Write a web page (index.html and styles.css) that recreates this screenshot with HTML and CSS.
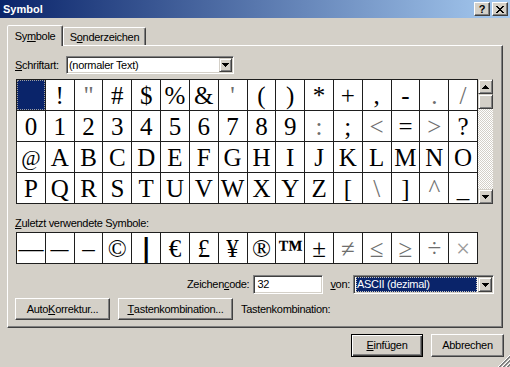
FILE: index.html
```html
<!DOCTYPE html>
<html lang="de">
<head>
<meta charset="utf-8">
<title>Symbol</title>
<link rel="stylesheet" href="styles.css">
</head>
<body>
<div class="titlebar">
  <span class="title">Symbol</span>
  <div class="capbtns">
    <span class="capbtn help">?</span>
    <span class="capbtn close"><svg width="8" height="7" viewBox="0 0 8 7" shape-rendering="crispEdges"><path d="M0 0h2v1H0zM6 0h2v1H6zM1 1h2v1H1zM5 1h2v1H5zM2 2h4v1H2zM3 3h2v1H3zM2 4h4v1H2zM1 5h2v1H1zM5 5h2v1H5zM0 6h2v1H0zM6 6h2v1H6z" fill="#000"/></svg></span>
  </div>
</div>

<div class="tabs">
  <div class="tab active">Sy<u>m</u>bole</div>
  <div class="tab inactive">S<u>o</u>nderzeichen</div>
</div>

<div class="panel">
  <div class="fontrow">
    <span class="lbl"><u>S</u>chriftart:</span>
    <div class="field combo font">
      <span class="val">(normaler Text)</span>
      <span class="ddbtn"><svg width="7" height="4" viewBox="0 0 7 4" shape-rendering="crispEdges"><path d="M0 0h7v1H0zM1 1h5v1H1zM2 2h3v1H2zM3 3h1v1H3z" fill="#000"/></svg></span>
    </div>
  </div>

  <div class="charwrap">
    <div class="chargrid">
      <div class="cell sel"></div><div class="cell">!</div><div class="cell lt">"</div><div class="cell">#</div><div class="cell">$</div><div class="cell">%</div><div class="cell">&amp;</div><div class="cell lt">'</div><div class="cell">(</div><div class="cell">)</div><div class="cell">*</div><div class="cell">+</div><div class="cell">,</div><div class="cell">-</div><div class="cell lt">.</div><div class="cell lt">/</div>
      <div class="cell">0</div><div class="cell">1</div><div class="cell">2</div><div class="cell">3</div><div class="cell">4</div><div class="cell">5</div><div class="cell">6</div><div class="cell">7</div><div class="cell">8</div><div class="cell">9</div><div class="cell lt">:</div><div class="cell">;</div><div class="cell lt">&lt;</div><div class="cell">=</div><div class="cell lt">&gt;</div><div class="cell">?</div>
      <div class="cell at">@</div><div class="cell">A</div><div class="cell">B</div><div class="cell">C</div><div class="cell">D</div><div class="cell">E</div><div class="cell">F</div><div class="cell">G</div><div class="cell">H</div><div class="cell">I</div><div class="cell">J</div><div class="cell">K</div><div class="cell">L</div><div class="cell">M</div><div class="cell">N</div><div class="cell">O</div>
      <div class="cell">P</div><div class="cell">Q</div><div class="cell">R</div><div class="cell">S</div><div class="cell">T</div><div class="cell">U</div><div class="cell">V</div><div class="cell">W</div><div class="cell">X</div><div class="cell">Y</div><div class="cell">Z</div><div class="cell">[</div><div class="cell lt">\</div><div class="cell">]</div><div class="cell lt">^</div><div class="cell">_</div>
    </div>
    <div class="vscroll">
      <span class="sbtn"><svg width="7" height="4" viewBox="0 0 7 4" shape-rendering="crispEdges"><path d="M3 0h1v1H3zM2 1h3v1H2zM1 2h5v1H1zM0 3h7v1H0z" fill="#000"/></svg></span>
      <span class="sbtn thumb"></span>
      <span class="track"></span>
      <span class="sbtn"><svg width="7" height="4" viewBox="0 0 7 4" shape-rendering="crispEdges"><path d="M0 0h7v1H0zM1 1h5v1H1zM2 2h3v1H2zM3 3h1v1H3z" fill="#000"/></svg></span>
    </div>
  </div>

  <div class="recentlbl"><u>Z</u>uletzt verwendete Symbole:</div>
  <div class="recent">
    <div class="cell">—</div><div class="cell"><span class="dash2">—</span></div><div class="cell">–</div><div class="cell">©</div><div class="cell vbar">|</div><div class="cell">€</div><div class="cell">£</div><div class="cell">¥</div><div class="cell">®</div><div class="cell tm">™</div><div class="cell">±</div><div class="cell lt">≠</div><div class="cell lt">≤</div><div class="cell lt">≥</div><div class="cell lt">÷</div><div class="cell xlt">×</div>
  </div>

  <div class="coderow">
    <span class="lbl">Zeichen<u>c</u>ode:</span>
    <div class="field code">32</div>
    <span class="lbl vonlbl"><u>v</u>on:</span>
    <div class="field combo von">
      <span class="val"><span class="hl">ASCII (dezimal)</span></span>
      <span class="ddbtn"><svg width="7" height="4" viewBox="0 0 7 4" shape-rendering="crispEdges"><path d="M0 0h7v1H0zM1 1h5v1H1zM2 2h3v1H2zM3 3h1v1H3z" fill="#000"/></svg></span>
    </div>
  </div>

  <div class="btnrow">
    <span class="btn b1">Auto<u>K</u>orrektur...</span>
    <span class="btn b2"><u>T</u>astenkombination...</span>
    <span class="lbl">Tastenkombination:</span>
  </div>
</div>

<div class="footer">
  <span class="btn ok"><span><u>E</u>infügen</span></span>
  <span class="btn cancel">Abbrechen</span>
</div>

<svg class="grip" width="12" height="12" viewBox="0 0 12 12" shape-rendering="crispEdges">
  <path d="M12 0L0 12M12 4L4 12M12 8L8 12" stroke="#fff" stroke-width="1"/>
  <path d="M12 1L1 12M12 2L2 12M12 5L5 12M12 6L6 12M12 9L9 12M12 10L10 12" stroke="#808080" stroke-width="1"/>
</svg>
</body>
</html>
```

FILE: styles.css
```css
* { box-sizing: border-box; }
html, body { margin: 0; padding: 0; }
body {
  width: 510px;
  height: 367px;
  overflow: hidden;
  position: relative;
  background: #d4d0c8;
  color: #000;
  font: 11px/13px "Liberation Sans", Arial, sans-serif;
  letter-spacing: -0.3px;
}
u { text-decoration: underline; text-underline-offset: 1px; }

.titlebar {
  height: 18px;
  display: flex;
  align-items: center;
  padding: 0 2px 0 3px;
  background: linear-gradient(to right, #0a246a, #a6caf0);
}
.title { color: #fff; font-weight: bold; letter-spacing: 0; }
.capbtns { margin-left: auto; display: flex; gap: 2px; }
.capbtn {
  width: 16px; height: 14px;
  display: flex; align-items: center; justify-content: center;
  background: #d4d0c8;
  border: 1px solid; border-color: #fff #404040 #404040 #fff;
  box-shadow: inset -1px -1px #808080;
  font-weight: bold; font-size: 11px; line-height: 11px;
}

.tabs {
  display: flex; align-items: flex-end;
  height: 20px; margin-top: 7px; padding-left: 7px;
}
.tab {
  height: 18px;
  display: flex; align-items: center; justify-content: center;
  padding-top: 1px;
  border: 1px solid; border-bottom: 0;
  border-color: #fff #404040 transparent #fff;
  box-shadow: inset -1px 0 #808080;
  border-radius: 2px 2px 0 0;
}
.tab.active {
  width: 56px; height: 21px; margin-bottom: -1px;
  position: relative; z-index: 1;
  background: #d4d0c8; padding-top: 0;
}
.tab.inactive { width: 83px; }

.panel {
  margin-left: 7px; width: 496px;
  border: 1px solid; border-color: #fff #404040 #404040 #fff;
  box-shadow: inset -1px -1px #808080;
  padding: 10px 8px 7px;
}

.field {
  background: #fff;
  border: 1px solid; border-color: #808080 #fff #fff #808080;
  box-shadow: inset 1px 1px #404040, inset -1px -1px #d4d0c8;
  padding: 1px;
}
.combo { display: flex; }
.combo .val { flex: 1; display: flex; align-items: center; padding-left: 1px; }
.ddbtn {
  width: 14px; flex: none;
  display: flex; align-items: center; justify-content: center;
  background: #d4d0c8;
  border: 1px solid; border-color: #d4d0c8 #404040 #404040 #d4d0c8;
  box-shadow: inset 1px 1px #fff, inset -1px -1px #808080;
}

.fontrow { display: flex; align-items: center; height: 18px; }
.fontrow .lbl { width: 51px; margin-left: -1px; }
.combo.font { width: 168px; height: 18px; }
.combo.font .ddbtn { width: 13px; }

.charwrap { display: flex; margin-top: 5px; }
.chargrid, .recent {
  display: grid;
  grid-template-columns: repeat(16, 1fr);
  grid-auto-rows: 30px;
  gap: 1px; padding: 1px;
  background: #1e1e1e;
  width: 462px;
}
.cell {
  min-width: 0; overflow: hidden;
  background: #fff;
  text-align: center; white-space: nowrap;
  font: 25px/28px "Liberation Serif", "Times New Roman", serif;
  letter-spacing: 0;
  padding-top: 2px;
}
.cell.sel { background: #0a246a; outline: 1px dotted #a0a0a0; outline-offset: -1px; }
.cell.lt { color: #6e6e6e; }
.cell.xlt { color: #9a9a9a; }
.cell.at { font-size: 21px; }
.cell.tm { font-weight: bold; }
.cell.vbar { font-family: "DejaVu Sans", sans-serif; font-weight: bold; font-size: 27px; line-height: 27px; padding-top: 1px; }
.dash2 { display: inline-block; transform: scaleX(0.72); }

.vscroll { width: 15px; height: 125px; display: flex; flex-direction: column; }
.sbtn {
  height: 15px; flex: none;
  display: flex; align-items: center; justify-content: center;
  background: #d4d0c8;
  border: 1px solid; border-color: #d4d0c8 #404040 #404040 #d4d0c8;
  box-shadow: inset 1px 1px #fff, inset -1px -1px #808080;
}
.track {
  flex: 1;
  background-color: #fff;
  background-image: conic-gradient(#d4d0c8 25%, #fff 0 50%, #d4d0c8 0 75%, #fff 0);
  background-size: 2px 2px;
}

.recentlbl { margin-top: 13px; height: 13px; margin-left: -1px; }
.recent { margin-top: 2px; }

.coderow {
  display: flex; align-items: center; justify-content: flex-end;
  height: 19px; margin-top: 11px;
}
.code { width: 70px; height: 19px; margin-left: 4px; padding-left: 3px; display: flex; align-items: center; }
.vonlbl { margin-left: 7px; }
.combo.von { width: 141px; height: 19px; margin-left: 3px; }
.combo.von .val { padding: 0 1px 0 1px; align-items: stretch; }
.hl {
  flex: 1; display: flex; align-items: center;
  background: #0a246a; color: #fff;
  padding-left: 1px;
  outline: 1px dotted #c8c4bc; outline-offset: -1px;
}

.btn {
  height: 22px;
  display: flex; align-items: center; justify-content: center;
  background: #d4d0c8;
  border: 1px solid; border-color: #fff #404040 #404040 #fff;
  box-shadow: inset -1px -1px #808080;
}
.btnrow { display: flex; align-items: center; gap: 8px; height: 22px; margin-top: 4px; margin-left: -1px; }
.btn.b1 { width: 95px; }
.btn.b2 { width: 115px; }

.footer { display: flex; justify-content: flex-end; gap: 8px; margin-top: 6px; padding-right: 6px; }
.footer .btn { height: 23px; }
.btn.ok {
  width: 72px;
  border-color: #000;
  box-shadow: inset 1px 1px #fff, inset -1px -1px #404040, inset -2px -2px #808080;
}
.btn.cancel { width: 73px; }

.grip { position: absolute; right: 0; bottom: 0; }
```
